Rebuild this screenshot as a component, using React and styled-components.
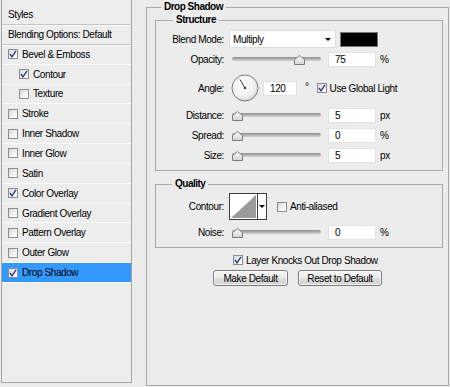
import React from "react";
import styled, { createGlobalStyle } from "styled-components";

const Global = createGlobalStyle`
  html, body { margin: 0; padding: 0; background: #ececec; }
  body {
    font-family: "Liberation Sans", Arial, sans-serif;
    font-size: 10px;
    letter-spacing: -0.4px;
    color: #000;
  }
  * { box-sizing: border-box; }
`;

const Dialog = styled.div`
  width: 450px;
  height: 387px;
  display: flex;
  align-items: stretch;
  background: #ececec;
`;

/* ---------- left styles list ---------- */
const StylesPanel = styled.div`
  align-self: flex-start;
  width: 131px;
  height: 383px;
  margin-left: 1px;
  border: 1px solid #a4a4a4;
  border-top: none;
  background: #ededed;
`;

const HeaderRow = styled.div`
  height: ${(p) => p.$h}px;
  display: flex;
  align-items: center;
  padding: ${(p) => p.$pt}px 0 0 6px;
  border-bottom: 1px solid #c4c4c4;
  box-shadow: 0 1px 0 #fbfbfb;
  position: relative;
`;

const EffectRow = styled.div`
  height: 19.85px;
  display: flex;
  align-items: center;
  gap: 4px;
  padding-left: ${(p) => (p.$indent ? 17 : 6)}px;
  background: ${(p) => (p.$selected ? "#3399ff" : "transparent")};
  border-bottom: 1px solid ${(p) => (p.$selected ? "#f6f6f6" : "#fbfbfb")};
`;

const CheckBox = styled.span`
  width: 10px;
  height: 10px;
  flex: none;
  display: inline-flex;
  align-items: center;
  justify-content: center;
  border: 1px solid #8d8d8d;
  background: linear-gradient(135deg, #d8d8d8 0%, #f4f4f4 60%, #ffffff 100%);
`;

const Check = ({ checked }) => (
  <CheckBox>
    {checked && (
      <svg width="8" height="8" viewBox="0 0 8 8">
        <path d="M1 4 L3 6.8 L7 0.8" fill="none" stroke="#2a3b8f" strokeWidth="1.4" />
      </svg>
    )}
  </CheckBox>
);

/* ---------- right side group boxes ---------- */
const RightColumn = styled.div`
  flex: 1;
  min-width: 0;
  display: flex;
  flex-direction: column;
  padding: 7px 1px 1px 14px;
`;

const Group = styled.section`
  position: relative;
  margin: ${(p) => p.$m};
  padding: ${(p) => p.$p};
  border: 1px solid #a9a9a9;
  ${(p) => (p.$grow ? "flex: 1;" : "")}
`;

const GroupTitle = styled.h3`
  position: absolute;
  top: -7px;
  left: ${(p) => p.$left}px;
  margin: 0;
  padding: 0 3px;
  background: #ececec;
  font-size: 10px;
  line-height: 12px;
  font-weight: bold;
  letter-spacing: -0.5px;
`;

const FormRow = styled.div`
  display: flex;
  align-items: center;
  height: ${(p) => p.$h}px;
  margin-top: ${(p) => p.$mt || 0}px;
`;

const Label = styled.span`
  width: 68px;
  flex: none;
  text-align: right;
  margin-right: 5px;
`;

const Select = styled.div`
  width: 107px;
  height: 18px;
  background: #fff;
  border: 1px solid #dedede;
  display: flex;
  align-items: center;
  justify-content: space-between;
  padding: 0 4px 0 3px;
`;

const DownArrow = styled.span`
  width: 0;
  height: 0;
  border-left: 3px solid transparent;
  border-right: 3px solid transparent;
  border-top: 3px solid #000;
`;

const Swatch = styled.div`
  width: 38px;
  height: 15px;
  margin-left: 4px;
  background: #000;
  border: 1px solid #777;
`;

const Slider = styled.div`
  position: relative;
  width: 89px;
  height: 15px;
  margin-left: 3px;
  margin-right: 7px;
  flex: none;
`;

const Track = styled.div`
  margin-top: 5px;
  height: 4px;
  border-radius: 2px;
  background: linear-gradient(#8c8c8c, #b9b9b9 60%, #d2d2d2);
`;

const Thumb = styled.svg`
  position: absolute;
  top: 3px;
  left: ${(p) => p.$pos}px;
`;

const SliderControl = ({ value, max = 100 }) => (
  <Slider>
    <Track />
    <Thumb $pos={Math.round((value / max) * 82)} width="11" height="10" viewBox="0 0 11 10">
      <defs>
        <linearGradient id={`tg${value}${max}`} x1="0" y1="0" x2="0" y2="1">
          <stop offset="0" stopColor="#ffffff" />
          <stop offset="1" stopColor="#d2d2d2" />
        </linearGradient>
      </defs>
      <path d="M0.5 9.5 V4.5 L5.5 0.5 L10.5 4.5 V9.5 Z" fill={`url(#tg${value}${max})`} stroke="#7a7a7a" />
    </Thumb>
  </Slider>
);

const Field = styled.div`
  width: ${(p) => p.$w}px;
  height: 15px;
  flex: none;
  margin-left: ${(p) => p.$ml || 0}px;
  background: #fff;
  border: 1px solid #e2e2e2;
  display: flex;
  align-items: center;
  padding-left: 6px;
`;

const Unit = styled.span`
  margin-left: 4px;
`;

const Dial = styled.svg`
  margin-left: 2px;
  flex: none;
`;

const Degree = styled.span`
  margin-left: 8px;
  margin-right: 8px;
  margin-bottom: 4px;
`;

const CheckLabel = styled.label`
  display: flex;
  align-items: center;
  gap: 3px;
  margin-left: ${(p) => p.$ml || 0}px;
`;

const ContourPicker = styled.div`
  display: flex;
  height: 27px;
  border: 1px solid #3c3c3c;
  background: #fff;
`;

const ContourArrow = styled.div`
  width: 9px;
  border-left: 1px solid #3c3c3c;
  display: flex;
  align-items: center;
  justify-content: center;
`;

const OptionRow = styled.div`
  display: flex;
  align-items: center;
  height: 12px;
  margin-top: 6px;
  padding-left: 86px;
`;

const Buttons = styled.div`
  display: flex;
  justify-content: center;
  gap: 10px;
  margin-top: 4px;
`;

const Button = styled.button`
  width: ${(p) => p.$w}px;
  height: 16px;
  padding: 0;
  font: inherit;
  letter-spacing: inherit;
  color: #000;
  border: 1px solid #7d7d7d;
  border-radius: 3px;
  background: linear-gradient(#f6f6f6 0%, #ececec 50%, #dedede 51%, #d4d4d4 100%);
  box-shadow: inset 0 0 0 1px rgba(255, 255, 255, 0.7);
`;

const effects = [
  { name: "Bevel & Emboss", checked: true },
  { name: "Contour", checked: true, indent: true },
  { name: "Texture", checked: false, indent: true },
  { name: "Stroke", checked: false },
  { name: "Inner Shadow", checked: false },
  { name: "Inner Glow", checked: false },
  { name: "Satin", checked: false },
  { name: "Color Overlay", checked: true },
  { name: "Gradient Overlay", checked: false },
  { name: "Pattern Overlay", checked: false },
  { name: "Outer Glow", checked: false },
  { name: "Drop Shadow", checked: true, selected: true },
];

export default function App() {
  return (
    <>
      <Global />
      <Dialog>
        <StylesPanel>
          <HeaderRow $h={25} $pt={5}>Styles</HeaderRow>
          <HeaderRow $h={19.85} $pt={0}>Blending Options: Default</HeaderRow>
          {effects.map((e) => (
            <EffectRow key={e.name} $indent={e.indent} $selected={e.selected}>
              <Check checked={e.checked} />
              <span>{e.name}</span>
            </EffectRow>
          ))}
        </StylesPanel>

        <RightColumn>
          <Group $grow $m="0" $p="0">
            <GroupTitle $left={14}>Drop Shadow</GroupTitle>

            <Group $m="12px 5px 0 8px" $p="9px 0 7px 0">
              <GroupTitle $left={17}>Structure</GroupTitle>
              <FormRow $h={18}>
                <Label>Blend Mode:</Label>
                <Select>
                  <span>Multiply</span>
                  <DownArrow />
                </Select>
                <Swatch />
              </FormRow>
              <FormRow $h={15} $mt={4}>
                <Label>Opacity:</Label>
                <SliderControl value={75} />
                <Field $w={48}>75</Field>
                <Unit>%</Unit>
              </FormRow>
              <FormRow $h={30} $mt={6}>
                <Label>Angle:</Label>
                <Dial width="28" height="28" viewBox="0 0 28 28">
                  <defs>
                    <radialGradient id="dialg" cx="0.4" cy="0.35" r="0.7">
                      <stop offset="0" stopColor="#ffffff" />
                      <stop offset="0.7" stopColor="#f0f0f0" />
                      <stop offset="1" stopColor="#cfcfcf" />
                    </radialGradient>
                  </defs>
                  <circle cx="14" cy="14" r="13" fill="url(#dialg)" stroke="#7c7c7c" />
                  <line x1="14" y1="14" x2="9" y2="5.5" stroke="#333" strokeWidth="1" />
                  <circle cx="14" cy="14" r="1.2" fill="#333" />
                </Dial>
                <Field $w={34} $ml={4}>120</Field>
                <Degree>°</Degree>
                <CheckLabel>
                  <Check checked />
                  <span>Use Global Light</span>
                </CheckLabel>
              </FormRow>
              <FormRow $h={15} $mt={5}>
                <Label>Distance:</Label>
                <SliderControl value={0} />
                <Field $w={48}>5</Field>
                <Unit>px</Unit>
              </FormRow>
              <FormRow $h={15} $mt={5}>
                <Label>Spread:</Label>
                <SliderControl value={0} />
                <Field $w={48}>0</Field>
                <Unit>%</Unit>
              </FormRow>
              <FormRow $h={15} $mt={5}>
                <Label>Size:</Label>
                <SliderControl value={0} />
                <Field $w={48}>5</Field>
                <Unit>px</Unit>
              </FormRow>
            </Group>

            <Group $m="13px 5px 0 8px" $p="8px 0 7px 0">
              <GroupTitle $left={16}>Quality</GroupTitle>
              <FormRow $h={27}>
                <Label>Contour:</Label>
                <ContourPicker>
                  <svg width="27" height="25" viewBox="0 0 27 25">
                    <path d="M1 24 L26 1 L26 24 Z" fill="#9b9b9b" />
                  </svg>
                  <ContourArrow>
                    <DownArrow />
                  </ContourArrow>
                </ContourPicker>
                <CheckLabel $ml={10}>
                  <Check checked={false} />
                  <span>Anti-aliased</span>
                </CheckLabel>
              </FormRow>
              <FormRow $h={15} $mt={5}>
                <Label>Noise:</Label>
                <SliderControl value={0} />
                <Field $w={48}>0</Field>
                <Unit>%</Unit>
              </FormRow>
            </Group>

            <OptionRow>
              <CheckLabel>
                <Check checked />
                <span>Layer Knocks Out Drop Shadow</span>
              </CheckLabel>
            </OptionRow>
            <Buttons>
              <Button $w={75}>Make Default</Button>
              <Button $w={84}>Reset to Default</Button>
            </Buttons>
          </Group>
        </RightColumn>
      </Dialog>
    </>
  );
}
